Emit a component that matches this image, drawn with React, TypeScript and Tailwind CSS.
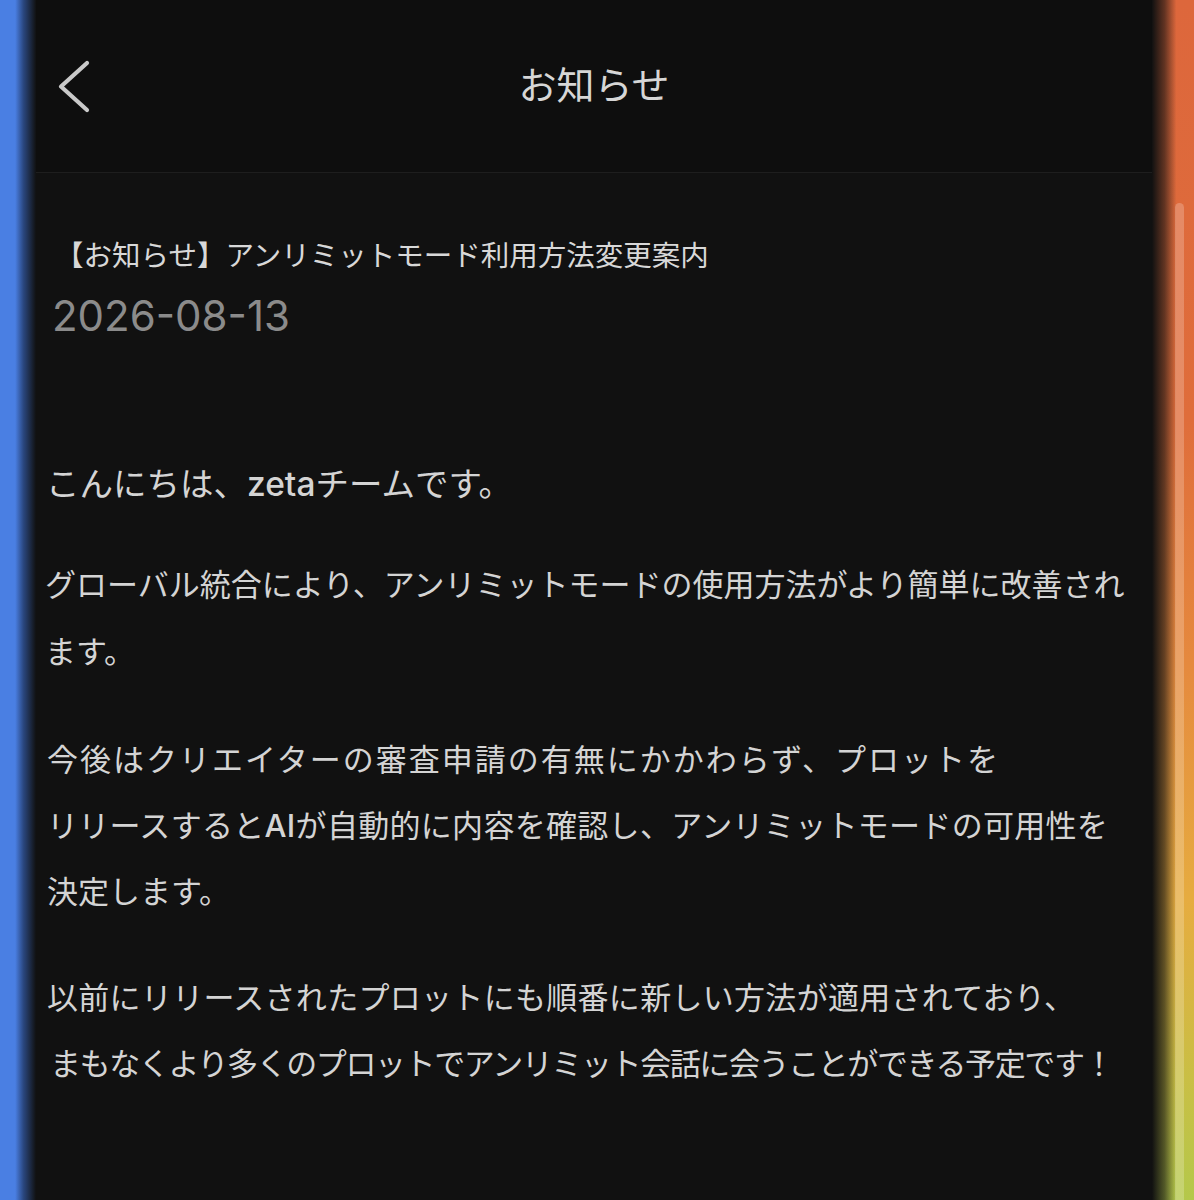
import React from "react";

const jp = { fontFamily: '"Inter", "Noto Sans CJK JP", sans-serif' };

export default function App() {
  return (
    <div
      className="flex w-[1194px] h-[1200px] overflow-hidden bg-[#111111] text-[#d4d4d4]"
      style={jp}
    >
      {/* left glow */}
      <div className="w-[36px] shrink-0 bg-[linear-gradient(to_right,#4a7fe3_0%,#4a7fe3_42%,#2a4780_65%,#111111_100%)]" />

      {/* main */}
      <div className="flex-1 flex flex-col min-w-0">
        <header className="h-[173px] shrink-0 bg-[#0e0e0e] border-b border-[#1e1e1e] grid grid-cols-[1fr_auto_1fr] items-center">
          <div className="pl-[22px] flex items-center">
            <svg width="34" height="54" viewBox="0 0 34 54" fill="none">
              <path
                d="M29 4 L3 27.5 L29 51"
                stroke="#c9c9c9"
                strokeWidth="4.2"
                strokeLinecap="round"
                strokeLinejoin="round"
              />
            </svg>
          </div>
          <div className="text-[38px] leading-[48px] text-[#d6d6d6] pb-[2px]">お知らせ</div>
          <div />
        </header>

        <div className="flex flex-col pl-[9px]">
          <div className="mt-[63px] pl-[10px] text-[28.5px] leading-[40px] text-[#d8d8d8]">
            【お知らせ】アンリミットモード利用方法変更案内
          </div>
          <div className="mt-[16px] pl-[7px] text-[42px] leading-[48px] text-[#8b8b8b]">
            2026-08-13
          </div>

          <div className="mt-[111px] pl-[1px] text-[33.5px] leading-[66px]">
            こんにちは、<span className="font-medium">zeta</span>チームです。
          </div>

          <div className="mt-[34px] text-[31px] leading-[67px] whitespace-nowrap">
            <div>グローバル統合により、アンリミットモードの使用方法がより簡単に改善され</div>
            <div>ます。</div>
          </div>

          <div className="mt-[42px] pl-[2px] text-[31px] leading-[66px] whitespace-nowrap">
            <div className="tracking-[2px]">今後はクリエイターの審査申請の有無にかかわらず、プロットを</div>
            <div className="tracking-[0.3px]">
              リリースすると<span className="font-medium">AI</span>が自動的に内容を確認し、アンリミットモードの可用性を
            </div>
            <div>決定します。</div>
          </div>

          <div className="mt-[40px] pl-[2px] text-[31px] leading-[66px] whitespace-nowrap">
            <div className="tracking-[0.3px]">以前にリリースされたプロットにも順番に新しい方法が適用されており、</div>
            <div className="pl-[3px] tracking-[-1.4px]">まもなくより多くのプロットでアンリミット会話に会うことができる予定です！</div>
          </div>
        </div>
      </div>

      {/* right glow with scrollbar */}
      <div className="w-[42px] shrink-0 flex flex-col bg-[linear-gradient(to_right,#111111_0%,rgba(17,17,17,0.6)_30%,rgba(17,17,17,0)_58%),linear-gradient(to_bottom,#dd673c_0%,#df6d3b_35%,#e5893e_55%,#e6ac40_75%,#c9bf45_90%,#b4c84b_100%)]">
        <div className="h-[203px] shrink-0" />
        <div className="ml-[23px] w-[9px] flex-1 rounded-t-full bg-[rgba(255,255,255,0.22)]" />
      </div>
    </div>
  );
}
